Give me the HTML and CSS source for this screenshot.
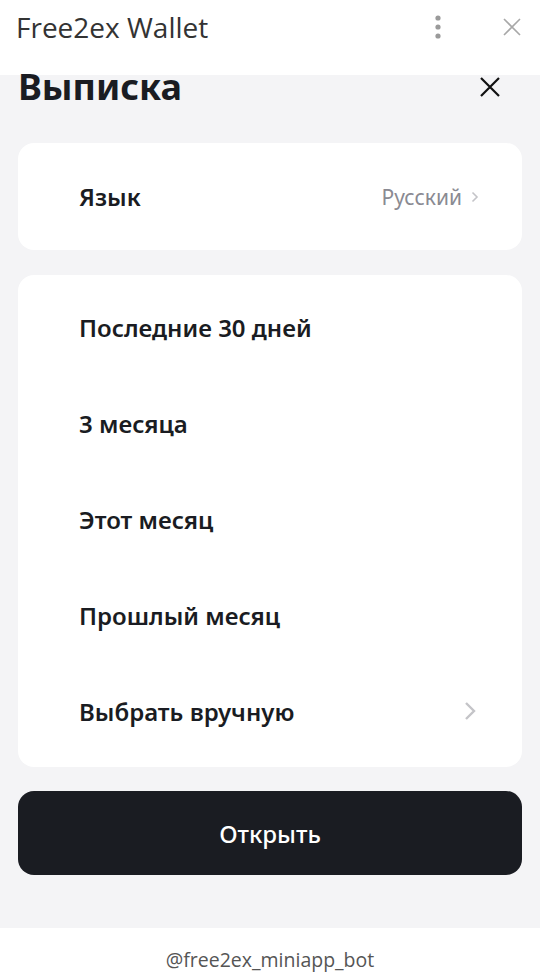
FILE: index.html
```html
<!DOCTYPE html>
<html lang="ru">

<head>
    <meta charset="UTF-8">
    <meta name="viewport" content="width=device-width, initial-scale=1.0">
    <title>Free2ex Wallet</title>

    <link rel="stylesheet" href="styles.css">
</head>

<body>
    <header class="app-bar">
        <h2 class="app-title">Free2ex Wallet</h2>
        <div class="app-actions">
            <button class="icon-btn menu-btn" aria-label="Меню">
                <svg width="10" height="28" viewBox="0 0 10 28">
                    <circle cx="5" cy="5" r="2.6" fill="#9a9a9a" />
                    <circle cx="5" cy="14" r="2.6" fill="#9a9a9a" />
                    <circle cx="5" cy="23" r="2.6" fill="#9a9a9a" />
                </svg>
            </button>
            <button class="icon-btn close-app" aria-label="Закрыть">
                <svg width="20" height="20" viewBox="0 0 20 20">
                    <path d="M2 2 L18 18 M18 2 L2 18" stroke="#a8a8a8" stroke-width="1.6" fill="none" />
                </svg>
            </button>
        </div>
    </header>

    <main class="sheet">
        <div class="sheet-head">
            <h1>Выписка</h1>
            <button class="icon-btn" aria-label="Закрыть">
                <svg width="22" height="22" viewBox="0 0 22 22">
                    <path d="M2 2 L20 20 M20 2 L2 20" stroke="#111" stroke-width="2.2" fill="none" />
                </svg>
            </button>
        </div>

        <ul class="card">
            <li class="row">
                <span>Язык</span>
                <span class="row-value">Русский
                    <svg class="chevron small" width="8" height="12" viewBox="0 0 8 12">
                        <path d="M1.5 1.5 L6 6 L1.5 10.5" stroke="#c4c4c8" stroke-width="1.6" fill="none" />
                    </svg>
                </span>
            </li>
        </ul>

        <ul class="card periods">
            <li class="row">Последние 30 дней</li>
            <li class="row">3 месяца</li>
            <li class="row">Этот месяц</li>
            <li class="row">Прошлый месяц</li>
            <li class="row">
                <span>Выбрать вручную</span>
                <svg class="chevron" width="12" height="20" viewBox="0 0 12 20">
                    <path d="M2 2 L10 10 L2 18" stroke="#c4c4c8" stroke-width="2.4" fill="none" />
                </svg>
            </li>
        </ul>

        <button class="open-btn">Открыть</button>
    </main>

    <footer class="bot-name">@free2ex_miniapp_bot</footer>
</body>

</html>
```

FILE: styles.css
```css
* {
    margin: 0;
    padding: 0;
    box-sizing: border-box;
}

body {
    width: 540px;
    height: 972px;
    display: flex;
    flex-direction: column;
    font-family: "Noto Sans", "Open Sans", sans-serif;
    color: #1a1c22;
    background-color: #f4f4f6;
}

ul {
    list-style: none;
}

button {
    border: none;
    background: none;
    font: inherit;
    cursor: pointer;
}

.icon-btn {
    display: flex;
    align-items: center;
    justify-content: center;
}

.app-bar {
    height: 75px;
    flex-shrink: 0;
    background-color: white;
    display: flex;
    align-items: flex-start;
    justify-content: space-between;
    padding: 8px 18px 0 16px;
}

.app-title {
    font-family: "Open Sans", sans-serif;
    font-weight: 400;
    font-size: 28px;
    line-height: 38px;
    color: #333;
}

.app-actions {
    display: flex;
    align-items: center;
    gap: 59px;
    padding-top: 5px;
}

.sheet {
    flex: 1;
    padding: 0 18px;
    display: flex;
    flex-direction: column;
}

.sheet-head {
    display: flex;
    justify-content: space-between;
    align-items: center;
    height: 24px;
    padding-right: 21px;
}

.sheet-head h1 {
    font-size: 36px;
    font-weight: 700;
    line-height: 24px;
}

.card {
    background-color: white;
    border-radius: 16px;
    margin-top: 44px;
    padding: 6px 0;
}

.card + .card {
    margin-top: 25px;
}

.row {
    height: 96px;
    padding: 0 46px 0 61px;
    display: flex;
    align-items: center;
    justify-content: space-between;
    font-size: 24px;
    font-weight: 600;
}

.card:first-of-type .row {
    height: 95px;
}

.row-value {
    display: flex;
    align-items: center;
    gap: 9px;
    color: #8a8a92;
    font-weight: 400;
    font-size: 21px;
    margin-right: -3px;
}

.periods {
    padding: 4px 0 8px;
}

.open-btn {
    margin-top: 24px;
    height: 84px;
    border-radius: 16px;
    background-color: #1a1c22;
    color: white;
    font-size: 24px;
    font-weight: 500;
}

.bot-name {
    height: 44px;
    flex-shrink: 0;
    background-color: white;
    display: flex;
    align-items: center;
    justify-content: center;
    padding-top: 18px;
    font-family: "Open Sans", sans-serif;
    font-size: 19.5px;
    color: #555;
}
```
